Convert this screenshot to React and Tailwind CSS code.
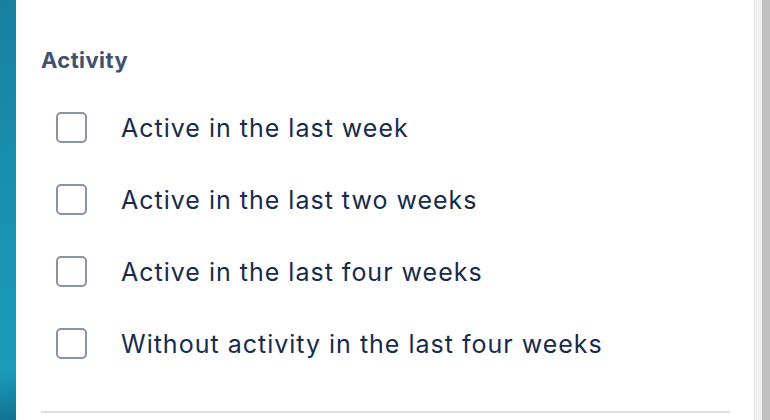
import React from 'react';

const OPTIONS = [
    'Active in the last week',
    'Active in the last two weeks',
    'Active in the last four weeks',
    'Without activity in the last four weeks',
];

export default function App() {
    return (
        <div className="flex h-[420px] w-[770px] overflow-hidden bg-white font-['Inter',sans-serif]">
            <div className="w-[16px] shrink-0 bg-[linear-gradient(172deg,#17809f_0%,#1990ae_45%,#1b9cb9_88%,#0f7392_100%)]" />
            <div className="flex-1 pl-[25px] pr-[24px]">
                <h3 className="mt-[46px] text-[22px] font-bold leading-[28px] tracking-[0.4px] text-[#42526e]">Activity</h3>
                <div className="mt-[17px] flex flex-col">
                    {OPTIONS.map(label => (
                        <label key={label} className="flex h-[72px] items-center">
                            <span className="ml-[15px] h-[31px] w-[31px] shrink-0 rounded-[5px] border-2 border-[#8993a4] bg-white" />
                            <span className="ml-[34px] pt-[3px] text-[25px] tracking-[1px] text-[#172b4d]">{label}</span>
                        </label>
                    ))}
                </div>
                <div className="mt-[32px] h-[2px] bg-[#dfe1e6]" />
            </div>
            <div className="flex shrink-0">
                <div className="w-px bg-[#e3e3e3]" />
                <div className="w-[7px] bg-[#f1f1f1]" />
                <div className="w-[8px] bg-[#c1c1c1]" />
            </div>
        </div>
    );
}
